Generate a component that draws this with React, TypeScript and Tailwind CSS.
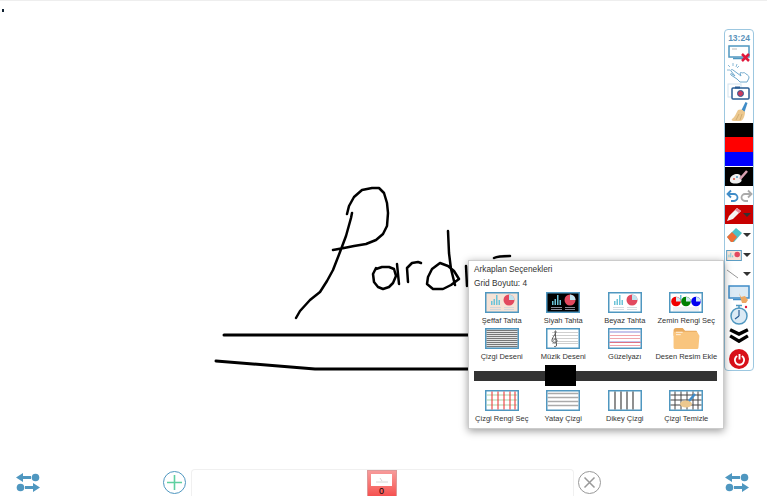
const font = "font-['Liberation_Sans',Arial,sans-serif]";

function Frame({ children, bg = "#fff" }: { children: React.ReactNode; bg?: string }) {
  return (
    <svg width="34" height="21" viewBox="0 0 34 21">
      <rect x="0.75" y="0.75" width="32.5" height="19.5" fill={bg} stroke="#4f97c0" strokeWidth="1.5" />
      {children}
    </svg>
  );
}

function Chart({ bg, pie = "#e2495f", line = "#c9d4dc" }: { bg: string; pie?: string; line?: string }) {
  return (
    <Frame bg={bg}>
      <g fill="#6cc3d8">
        <rect x="6" y="9" width="1.5" height="4" />
        <rect x="8.5" y="7" width="1.5" height="6" />
        <rect x="11" y="3" width="1.5" height="10" />
        <rect x="13.5" y="8" width="1.5" height="5" />
      </g>
      <circle cx="24" cy="8" r="5.5" fill={pie} />
      <path d="M24 8V2.500a5.500 5.500 0 0 1 5.500 5.500z" fill="#bfe3ee" />
      <path d="M5 15.500h11M5 17.500h11M19 15.500h10M19 17.500h10" stroke={line} strokeWidth="0.8" />
    </Frame>
  );
}

function ZeminIcon() {
  return (
    <Frame>
      <g fill="#6cc3d8">
        <rect x="11" y="3" width="1.5" height="8" />
        <rect x="14" y="5" width="1.5" height="6" />
      </g>
      <circle cx="7" cy="9.500" r="4.800" fill="#f00000" />
      <circle cx="17" cy="9.500" r="4.800" fill="#008000" />
      <circle cx="27" cy="9.500" r="4.800" fill="#0000f0" />
      <path d="M7 9.500V5a4.800 4.800 0 0 1 4.800 4.500zM17 9.500V5a4.800 4.800 0 0 1 4.800 4.500zM27 9.500V5a4.800 4.800 0 0 1 4.800 4.500z" fill="#cfe9f2" />
      <path d="M4 16h26M4 18h26" stroke="#d5dde3" strokeWidth="0.8" />
    </Frame>
  );
}

function StripesIcon() {
  const ys = [2.5, 4.5, 6.5, 8.5, 10.5, 12.5, 14.5, 16.5, 18.5];
  return (
    <Frame bg="#e4e4e4">
      {ys.map((y) => (
        <path key={y} d={`M1.500 ${y}h31`} stroke="#777" strokeWidth="1" />
      ))}
    </Frame>
  );
}

function MusicIcon() {
  return (
    <Frame>
      <path d="M6 4.500h26M6 7.500h26M6 10.500h26M6 13.500h26M6 15.500h26" stroke="#cfcfcf" strokeWidth="1" />
      <path d="M9.500 2.500c2 3-3.500 6-3.500 10 0 3 5 3 5 0 0-2-3.500-2-3.500 0M9 3l1.500 14c0 2-2 2-2.500 1" fill="none" stroke="#555" strokeWidth="1" />
    </Frame>
  );
}

function GuzelyaziIcon() {
  return (
    <Frame>
      <path d="M1.500 4h31M1.500 14h31" stroke="#8d8dd8" strokeWidth="1" />
      <path d="M1.500 7.500h31M1.500 10.500h31M1.500 17.500h31" stroke="#f0a6ac" strokeWidth="1" />
      <path d="M1.500 14.500h31" stroke="#e35d6a" strokeWidth="0.8" />
    </Frame>
  );
}

function FolderIcon() {
  return (
    <svg width="29" height="23" viewBox="0 0 29 24">
      <path d="M1 3.500C1 2 2 1 3.500 1h7L13 4h11c1 0 1.500.5 1.500 1.500V9H1z" fill="#e8a95c" />
      <path d="M1 5h24.500L28 9l-1 12c0 1.500-1 2-2 2H3c-1.500 0-2-1-2-2z" fill="#f9c57e" />
      <path d="M3.500 5.500h7M3.500 8h5" stroke="#fff" strokeWidth="1" opacity="0.8" />
    </svg>
  );
}

function GridColorIcon() {
  return (
    <Frame>
      <path d="M1.500 5h31M1.500 10h31M1.500 15h31" stroke="#a9d3a9" strokeWidth="1.200" />
      <path d="M7 1.500v18M13 1.500v18M19 1.500v18M25 1.500v18M30 1.500v18" stroke="#ee2a2a" strokeWidth="1" />
    </Frame>
  );
}

function HorizontalIcon() {
  return (
    <Frame>
      <path d="M1.500 3.500h31M1.500 7.500h31M1.500 11.500h31M1.500 15.500h31" stroke="#aaa" strokeWidth="1.500" />
    </Frame>
  );
}

function VerticalIcon() {
  return (
    <Frame>
      <path d="M7 1.500v18M13 1.500v18M19 1.500v18M25 1.500v18" stroke="#555" strokeWidth="1.300" />
    </Frame>
  );
}

function ClearGridIcon() {
  return (
    <Frame>
      <path d="M1.500 5h31M1.500 10h31M1.500 15h31M6 1.500v18M12 1.500v18M18 1.500v18M24 1.500v18M29 1.500v18" stroke="#444" strokeWidth="1" />
      <ellipse cx="17" cy="14" rx="6" ry="3.500" fill="#ecc88f" />
      <path d="M20 11l6-7" stroke="#3f8cc8" strokeWidth="2.500" />
    </Frame>
  );
}

const rows = [
  { label: "Şeffaf Tahta", icon: <Chart bg="#f6e3d6" /> },
  { label: "Siyah Tahta", icon: <Chart bg="#000" line="#aab" /> },
  { label: "Beyaz Tahta", icon: <Chart bg="#fff" /> },
  { label: "Zemin Rengi Seç", icon: <ZeminIcon /> },
  { label: "Çizgi Deseni", icon: <StripesIcon /> },
  { label: "Müzik Deseni", icon: <MusicIcon /> },
  { label: "Güzelyazı", icon: <GuzelyaziIcon /> },
  { label: "Desen Resim Ekle", icon: <FolderIcon /> },
];

const lastRow = [
  { label: "Çizgi Rengi Seç", icon: <GridColorIcon /> },
  { label: "Yatay Çizgi", icon: <HorizontalIcon /> },
  { label: "Dikey Çizgi", icon: <VerticalIcon /> },
  { label: "Çizgi Temizle", icon: <ClearGridIcon /> },
];

function Cell({ label, icon }: { label: string; icon: React.ReactNode }) {
  return (
    <div className="flex flex-col items-center">
      <div className="flex h-[21px] items-center justify-center">{icon}</div>
      <div className="mt-[2px] h-[11px] whitespace-nowrap text-[7.5px] leading-[11px] text-[#333]">{label}</div>
    </div>
  );
}

function BackgroundPopup() {
  return (
    <div className="absolute left-[468px] top-[260px] h-[169px] w-[256px] border border-[#ccc] bg-white shadow-[0_2px_8px_rgba(0,0,0,0.4)]">
      <div className="pl-[5px] pt-[3px] text-[8.3px] leading-[11px] text-[#333]">Arkaplan Seçenekleri</div>
      <div className="pl-[5px] pt-[3px] text-[8.3px] leading-[11px] text-[#333]">Grid Boyutu: 4</div>
      <div className="ml-[2px] mt-[3px] grid w-[246px] grid-cols-4 gap-y-[2px]">
        {rows.map((c) => (
          <Cell key={c.label} label={c.label} icon={c.icon} />
        ))}
      </div>
      <div className="relative ml-[5px] mt-[9px] h-[10px] w-[243px] bg-[#333]">
        <div className="absolute left-[71px] top-[-6px] h-[21px] w-[31px] bg-black" />
      </div>
      <div className="ml-[2px] mt-[9px] grid w-[246px] grid-cols-4">
        {lastRow.map((c) => (
          <Cell key={c.label} label={c.label} icon={c.icon} />
        ))}
      </div>
    </div>
  );
}

function Caret() {
  return <div className="h-0 w-0 border-x-[4px] border-t-[4px] border-x-transparent border-t-[#333]" />;
}

function Toolbar() {
  return (
    <div className="absolute left-[724px] top-[29px] flex h-[342px] w-[30px] flex-col items-center rounded-[4px] border border-[#9cc7e0] bg-white">
      <div className="mt-[2px] h-[12px] text-[8.5px] font-bold leading-[12px] text-[#5b93bb]">13:24</div>
      <svg width="22" height="18" viewBox="0 0 22 18" className="mt-[1px]">
        <rect x="1" y="1" width="20" height="11" fill="#fff" stroke="#4f97c0" strokeWidth="1.500" />
        <path d="M5 13.500h10" stroke="#4f97c0" strokeWidth="1.500" />
        <path d="M4 4h5" stroke="#bbb" />
        <path d="M14 9l7 7M21 9l-7 7" stroke="#e0183c" strokeWidth="2.500" />
      </svg>
      <svg width="24" height="20" viewBox="0 0 24 20" fill="none">
        <path d="M6 7l8 6-1-3c1-1 2 0 3 0 1-1 2 0 3 1 2 1 3 2 3 4l-2 4-7 0-3-3-6-4c-1-1 0-2 1-1l3 2-4-5c-1-1 1-2 2-1z" fill="#fff" stroke="#6fa8cc" strokeWidth="1" />
        <path d="M1 2l2 2M6 0v3M0 7h3M10 1L9 4M12 3l-2 2" stroke="#6fa8cc" strokeWidth="0.800" />
      </svg>
      <svg width="24" height="18" viewBox="0 0 24 18">
        <rect x="1" y="1" width="13" height="13" fill="none" stroke="#d2e3ef" />
        <rect x="5" y="5" width="17" height="11" rx="1" fill="#fff" stroke="#2a5d94" strokeWidth="1.500" />
        <rect x="8" y="3.500" width="5" height="2" fill="#2a5d94" />
        <circle cx="13.500" cy="10.500" r="3" fill="#c93a5c" stroke="#2a5d94" />
      </svg>
      <svg width="18" height="21" viewBox="0 0 18 21">
        <path d="M15.500 1l-4 8 3 2 3-9z" fill="#3f8cc8" />
        <path d="M8 9c2-1 4-1 7 2 0 4-2 9-5 9H4c-2 0-3-1-2-2 3-2 4-6 6-9z" fill="#ecc88f" />
        <path d="M6 19l3-6M10 19l2-6" stroke="#c9a468" strokeWidth="0.800" />
      </svg>
      <div className="mt-[1px] h-[14px] w-full bg-black" />
      <div className="h-[15px] w-full bg-[#f00]" />
      <div className="h-[14px] w-full bg-[#00f]" />
      <div className="mt-[1px] flex h-[19px] w-full items-center justify-center bg-black">
        <svg width="20" height="16" viewBox="0 0 20 16">
          <path d="M1 10c1-5 8-6 10-4 2 1-1 3 1 4 1 1 1 3-2 4-4 1-10 1-9-4z" fill="#eee" />
          <circle cx="5" cy="10" r="1" fill="#e0503c" />
          <circle cx="8" cy="8" r="1" fill="#4f97c0" />
          <path d="M11 10l7-8" stroke="#d9a0b0" strokeWidth="2.500" />
        </svg>
      </div>
      <div className="flex h-[19px] w-full items-center justify-center gap-[1px]">
        <svg width="13" height="13" viewBox="0 0 13 13">
          <path d="M5 1.500L1.500 5 5 8.500M2 5h6a3.500 3.500 0 0 1 0 7H5" fill="none" stroke="#3f8cc8" strokeWidth="1.800" />
        </svg>
        <svg width="13" height="13" viewBox="0 0 13 13">
          <path d="M8 1.500L11.500 5 8 8.500M11 5H5a3.500 3.500 0 0 0 0 7h3" fill="none" stroke="#aaa" strokeWidth="1.800" />
        </svg>
      </div>
      <div className="flex h-[19px] w-full items-center justify-between bg-[#c80000] pl-[1px] pr-[2px]">
        <svg width="17" height="15" viewBox="0 0 17 15">
          <path d="M1 14l2-5 8-8 4 3-8 8z" fill="#f4f4f4" />
          <path d="M11 1l4 3-2 2-4-3z" fill="#e88a9c" />
        </svg>
        <Caret />
      </div>
      <div className="flex h-[21px] w-full items-center justify-between pl-[1px] pr-[2px]">
        <svg width="17" height="17" viewBox="0 0 17 17">
          <path d="M1 11L10 2l6 5-8 9H5z" fill="#4cc1c8" />
          <path d="M1 11l5-5 5 5-4 5H5z" fill="#ef6c35" />
        </svg>
        <Caret />
      </div>
      <div className="flex h-[20px] w-full items-center justify-between pl-[1px] pr-[2px]">
        <svg width="16" height="11" viewBox="0 0 17 12">
          <rect x="0.500" y="0.500" width="16" height="11" fill="#f6e3d6" stroke="#4f97c0" />
          <path d="M3 8V5M5 8V3M7 8V6" stroke="#6cc3d8" />
          <circle cx="12" cy="5" r="3" fill="#e2495f" />
        </svg>
        <Caret />
      </div>
      <div className="flex h-[17px] w-full items-center justify-between pl-[1px] pr-[2px]">
        <svg width="13" height="10" viewBox="0 0 13 10">
          <path d="M1 1l11 8" stroke="#999" />
        </svg>
        <Caret />
      </div>
      <svg width="22" height="18" viewBox="0 0 22 18" className="mt-[3px]">
        <rect x="1" y="1" width="20" height="12" fill="#dbeaf5" stroke="#3f8cc8" strokeWidth="1.500" />
        <path d="M5 14.500h10" stroke="#3f8cc8" strokeWidth="1.500" />
        <path d="M11 8l2 4 4-1 3 4-2 3h-4z" fill="#eda864" />
      </svg>
      <svg width="20" height="22" viewBox="0 0 20 22">
        <circle cx="10" cy="13" r="8" fill="#dbeaf5" stroke="#4f97c0" strokeWidth="1.500" />
        <path d="M10 13V7M10 13l-4 3" stroke="#2a5d94" strokeWidth="1.200" />
        <path d="M7 2.500h6M10 2.500v3" stroke="#4f97c0" strokeWidth="1.500" />
        <circle cx="17" cy="4" r="1.200" fill="#e0183c" />
      </svg>
      <svg width="22" height="16" viewBox="0 0 22 18" className="mt-[2px]">
        <path d="M1 3l10 5 10-5M1 10l10 6 10-6" fill="none" stroke="#000" strokeWidth="3.800" />
      </svg>
      <div className="mt-[6px] flex h-[20px] w-[20px] items-center justify-center rounded-full bg-[#d8111a]">
        <svg width="13" height="13" viewBox="0 0 14 14">
          <path d="M4.500 3.300a5 5 0 1 0 5 0M7 1v6" fill="none" stroke="#fff" strokeWidth="2" />
        </svg>
      </div>
    </div>
  );
}

function SwapIcon() {
  return (
    <svg width="24" height="19" viewBox="0 0 24 19" fill="#4f97c0">
      <path d="M0 4.500L7 0v3h8v3H7v3z" />
      <circle cx="19.500" cy="4.500" r="3.800" />
      <circle cx="4.500" cy="14.500" r="3.800" />
      <path d="M24 14.500L17 10v3H9v3h8v3z" />
    </svg>
  );
}

function Drawing() {
  return (
    <svg className="absolute left-0 top-0" width="767" height="496" viewBox="0 0 767 496" fill="none" stroke="#000" strokeWidth="3" strokeLinecap="round" strokeLinejoin="round">
      <path d="M296 318l4-7 10-11 10-8 7-11 6-11 7-18 6-16 5-18 1-5M347 214l2-8 5-9 8-7 10-2 7 0 5 5 3 10 1 10-1 13-4 8-7 6-10 4-12 2-10 2-11 2" strokeWidth="2.500" />
      <path d="M376 268l-3 6 1 8 4 5 5 2 6-2 4-4 3-7-2-7-5-2-7 0-6 2M397 264l2 20" strokeWidth="2.500" />
      <path d="M408 282l-1-14 5-5 6-1 3 1" strokeWidth="2.500" />
      <path d="M440 263l-8 6-4 8-1 7 6 5 10 0 8-4 8-6-5-8-6-5-8-3M448 231l1 22 2 16 4 16M466 266l1 20" strokeWidth="2.500" />
      <path d="M494 258c4-2 10-2 16-2" strokeWidth="2.500" />
      <path d="M224 335h256" />
      <path d="M216 361l99 8h165" />
    </svg>
  );
}

export default function App() {
  return (
    <div className={`relative flex h-[496px] w-[767px] flex-col overflow-hidden bg-white ${font}`}>
      <div className="relative flex-1">
        <div className="h-px w-full bg-[#eee]" />
        <div className="absolute left-[2px] top-[9px] h-[3px] w-[2px] bg-[#123]" />
      </div>
      <Drawing />
      <Toolbar />
      <BackgroundPopup />
      <div className="relative flex h-[27px] items-center pl-[16px] pr-[18px]">
        <SwapIcon />
        <div className="ml-[123px] flex h-[23px] w-[23px] items-center justify-center rounded-full border-[1.5px] border-[#4f97c0]">
          <svg width="15" height="15" viewBox="0 0 15 15">
            <path d="M7.500 0v15M0 7.500h15" stroke="#5fd0a0" strokeWidth="1.600" />
          </svg>
        </div>
        <div className="ml-[5px] flex h-[27px] w-[383px] justify-center rounded-t-[4px] border border-b-0 border-[#f0f0f0] pr-[2px]">
          <div className="flex h-[27px] w-[30px] flex-col items-center border border-[#d99] bg-gradient-to-b from-[#f79a9a] to-[#f55050]">
            <div className="mt-[3px] flex h-[14px] w-[21px] items-center justify-center bg-white">
              <svg width="14" height="8" viewBox="0 0 14 8">
                <path d="M5 2l2 3M1 6h12" stroke="#ccc" strokeWidth="0.800" />
              </svg>
            </div>
            <div className="text-[9px] leading-[10px] text-black">0</div>
          </div>
        </div>
        <div className="ml-[4px] flex h-[23px] w-[23px] items-center justify-center rounded-full border-[1.5px] border-[#999]">
          <svg width="13" height="13" viewBox="0 0 13 13">
            <path d="M1.500 1.500l10 10M11.500 1.500l-10 10" stroke="#999" strokeWidth="1.500" />
          </svg>
        </div>
        <div className="ml-auto">
          <SwapIcon />
        </div>
      </div>
    </div>
  );
}
